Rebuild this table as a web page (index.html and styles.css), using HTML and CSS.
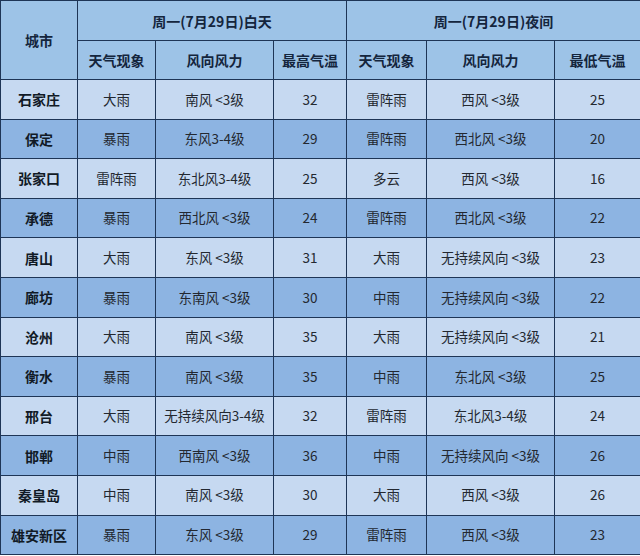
FILE: index.html
```html
<!DOCTYPE html>
<html lang="zh-CN">
<head>
<meta charset="utf-8">
<link rel="stylesheet" href="styles.css">
</head>
<body>
<table class="wx">
  <colgroup>
    <col class="c-city"><col class="c-ph"><col class="c-wind"><col class="c-t">
    <col class="c-ph2"><col class="c-wind2"><col class="c-t2">
  </colgroup>
  <thead>
    <tr class="h1">
      <th rowspan="2" class="city">城市</th>
      <th colspan="3">周一(7月29日)白天</th>
      <th colspan="3">周一(7月29日)夜间</th>
    </tr>
    <tr class="h2">
      <th>天气现象</th><th>风向风力</th><th>最高气温</th>
      <th>天气现象</th><th>风向风力</th><th>最低气温</th>
    </tr>
  </thead>
  <tbody>
    <tr class="lt"><th>石家庄</th><td>大雨</td><td>南风 &lt;3级</td><td>32</td><td>雷阵雨</td><td>西风 &lt;3级</td><td>25</td></tr>
    <tr class="dk"><th>保定</th><td>暴雨</td><td>东风3-4级</td><td>29</td><td>雷阵雨</td><td>西北风 &lt;3级</td><td>20</td></tr>
    <tr class="lt"><th>张家口</th><td>雷阵雨</td><td>东北风3-4级</td><td>25</td><td>多云</td><td>西风 &lt;3级</td><td>16</td></tr>
    <tr class="dk"><th>承德</th><td>暴雨</td><td>西北风 &lt;3级</td><td>24</td><td>雷阵雨</td><td>西北风 &lt;3级</td><td>22</td></tr>
    <tr class="lt"><th>唐山</th><td>大雨</td><td>东风 &lt;3级</td><td>31</td><td>大雨</td><td>无持续风向 &lt;3级</td><td>23</td></tr>
    <tr class="dk"><th>廊坊</th><td>暴雨</td><td>东南风 &lt;3级</td><td>30</td><td>中雨</td><td>无持续风向 &lt;3级</td><td>22</td></tr>
    <tr class="lt"><th>沧州</th><td>大雨</td><td>南风 &lt;3级</td><td>35</td><td>大雨</td><td>无持续风向 &lt;3级</td><td>21</td></tr>
    <tr class="dk"><th>衡水</th><td>暴雨</td><td>南风 &lt;3级</td><td>35</td><td>中雨</td><td>东北风 &lt;3级</td><td>25</td></tr>
    <tr class="lt"><th>邢台</th><td>大雨</td><td>无持续风向3-4级</td><td>32</td><td>雷阵雨</td><td>东北风3-4级</td><td>24</td></tr>
    <tr class="dk"><th>邯郸</th><td>中雨</td><td>西南风 &lt;3级</td><td>36</td><td>中雨</td><td>无持续风向 &lt;3级</td><td>26</td></tr>
    <tr class="lt"><th>秦皇岛</th><td>中雨</td><td>南风 &lt;3级</td><td>30</td><td>大雨</td><td>西风 &lt;3级</td><td>26</td></tr>
    <tr class="dk"><th>雄安新区</th><td>暴雨</td><td>东风 &lt;3级</td><td>29</td><td>雷阵雨</td><td>西风 &lt;3级</td><td>23</td></tr>
  </tbody>
</table>
</body>
</html>
```
FILE: styles.css
```css
html, body {
  margin: 0;
  padding: 0;
  background: #ffffff;
}
.wx {
  border-collapse: collapse;
  table-layout: fixed;
  width: 640px;
  font-family: "Noto Sans CJK SC", "Microsoft YaHei", sans-serif;
}
.c-city { width: 77px; }
.c-ph { width: 78px; }
.c-wind { width: 118px; }
.c-t { width: 73px; }
.c-ph2 { width: 80px; }
.c-wind2 { width: 128px; }
.c-t2 { width: 86px; }

.wx th, .wx td {
  border: 1px solid #1e3556;
  padding: 0;
  text-align: center;
  vertical-align: middle;
  line-height: 1;
  white-space: nowrap;
}
.wx thead th {
  background: #9dc3e7;
  color: #14253d;
  font-size: 14px;
  font-weight: bold;
}
.h1 { height: 40px; }
.h2 { height: 39px; }
.wx tbody tr { height: 39.6px; }
.wx tbody th {
  font-size: 14px;
  font-weight: bold;
  color: #111a26;
}
.wx tbody td {
  font-size: 13.5px;
  font-weight: normal;
  color: #232830;
}
.lt th, .lt td { background: #c6d9f1; }
.dk th, .dk td { background: #8db4e2; }
```
